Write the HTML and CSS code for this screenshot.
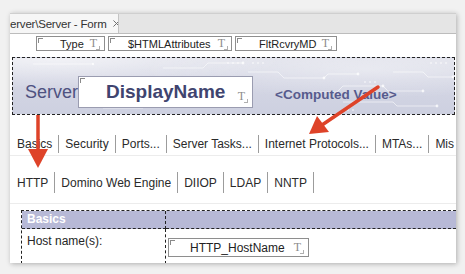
FILE: index.html
```html
<!DOCTYPE html>
<html lang="en">
<head>
  <meta charset="UTF-8" />
  <title>Server - Form</title>
  <link rel="stylesheet" href="styles.css">
</head>
<body>
  <div class="window">
    <div class="tabbar">
      <div class="doc-tab">
        <span class="doc-title">erver\Server - Form</span>
        <svg class="close" viewBox="0 0 8 8"><path d="M0.5 0.5L7.5 7.5M7.5 0.5L0.5 7.5" stroke="#6a6a6a" stroke-width="1.1" fill="none"/></svg>
      </div>
    </div>

    <div class="field-row">
      <span class="field f-type"><span class="field-name">Type</span><span class="t-mark">T</span></span>
      <span class="field f-html"><span class="field-name">$HTMLAttributes</span><span class="t-mark">T</span></span>
      <span class="field f-flt"><span class="field-name">FltRcvryMD</span><span class="t-mark">T</span></span>
    </div>

    <div class="banner">
      <span class="banner-label">Server</span>
      <span class="field big"><span class="field-name">DisplayName</span><span class="t-mark">T</span></span>
      <span class="computed">&lt;Computed Value&gt;</span>
    </div>

    <div class="tabs main-tabs">
      <span class="tab">Basics</span>
      <span class="tab">Security</span>
      <span class="tab">Ports...</span>
      <span class="tab">Server Tasks...</span>
      <span class="tab active">Internet Protocols...</span>
      <span class="tab">MTAs...</span>
      <span class="tab last">Mis</span>
    </div>

    <div class="tabs sub-tabs">
      <span class="tab">HTTP</span>
      <span class="tab">Domino Web Engine</span>
      <span class="tab">DIIOP</span>
      <span class="tab">LDAP</span>
      <span class="tab">NNTP</span>
    </div>

    <div class="grid">
      <div class="cell head">Basics</div>
      <div class="cell head"></div>
      <div class="cell label">Host name(s):</div>
      <div class="cell">
        <span class="field f-host"><span class="field-name">HTTP_HostName</span><span class="t-mark">T</span></span>
      </div>
    </div>
  </div>

  <!-- callout arrows drawn over the screenshot -->
  <svg class="arrows" viewBox="0 0 465 274">
    <line x1="378" y1="87" x2="322" y2="125" stroke="#de4329" stroke-width="3.5" stroke-linecap="round"/>
    <polygon points="309,134 329,132 317,116" fill="#de4329"/>
    <line x1="38" y1="115" x2="38" y2="151" stroke="#de4329" stroke-width="3.5"/>
    <polygon points="28,149 48,149 38,168" fill="#de4329"/>
  </svg>
</body>
</html>
```

FILE: styles.css
```css
* {
  box-sizing: border-box;
}
html, body {
  margin: 0;
  padding: 0;
}
body {
  width: 465px;
  height: 274px;
  overflow: hidden;
  position: relative;
  padding: 13px 9px 0 10px;
  background: #f1f1f1;
  font-family: 'Liberation Sans', Arial, sans-serif;
  color: #262626;
}
.window {
  width: 446px;
  height: 250px;
  background: #fff;
  box-shadow: 1px 1px 5px rgba(0,0,0,0.28);
  overflow: hidden;
  display: flex;
  flex-direction: column;
}

/* document tab strip */
.tabbar {
  flex: none;
  height: 21px;
  display: flex;
  background: #e5e5e5;
  border-top: 1px solid #cfcfcf;
  border-bottom: 1px solid #bcbcbc;
}
.doc-tab {
  width: 109px;
  display: flex;
  align-items: center;
  gap: 6px;
  background: #f6f6f6;
  border-right: 1px solid #c4c4c4;
  font-size: 11.5px;
  letter-spacing: -0.2px;
  color: #333;
  white-space: nowrap;
  overflow: hidden;
}
.close {
  width: 7px;
  height: 7px;
  flex: none;
}

/* field boxes */
.field-row {
  flex: none;
  height: 22px;
  display: flex;
  align-items: flex-start;
  gap: 3px;
  padding: 2px 0 0 26px;
}
.field {
  position: relative;
  display: flex;
  align-items: center;
  height: 15px;
  border: 1px solid #8e8e8e;
  background: #fff;
  font-size: 11px;
  color: #222;
  white-space: nowrap;
}
.field::before {
  content: "";
  position: absolute;
  left: 1px;
  top: 1px;
  width: 4px;
  height: 4px;
  border-left: 1px solid #8a8a8a;
  border-top: 1px solid #8a8a8a;
}
.t-mark {
  position: relative;
  margin-left: auto;
  padding-right: 3px;
  font-family: 'Liberation Serif', 'Times New Roman', serif;
  font-size: 12px;
  color: #8c8c8c;
}
.t-mark::after {
  content: "";
  position: absolute;
  right: 0;
  bottom: 1px;
  width: 3px;
  height: 3px;
  border-right: 1px solid #b0b0b0;
  border-bottom: 1px solid #b0b0b0;
}
.f-type { width: 69px; padding-left: 23px; padding-right: 4px; }
.f-html { width: 124px; padding-left: 19px; padding-right: 3px; }
.f-flt { width: 102px; padding-left: 23px; padding-right: 4px; }

/* banner with circuit-board texture */
.banner {
  flex: none;
  height: 58px;
  margin: 1px 1px 0 2px;
  padding: 18px 0 6px 12px;
  display: flex;
  align-items: center;
  border: 1px dashed #222;
  background:
    url("data:image/svg+xml;utf8,<svg xmlns='http://www.w3.org/2000/svg' width='443' height='56'><g stroke='white' stroke-opacity='0.55' fill='none'><path d='M150 10h40l5-5h35'/><path d='M235 14h30l6 6h40l4-4h30'/><path d='M300 34h24l6-6h40l5 5h35'/><path d='M330 44h50l4 4h40'/><path d='M380 14h30l5 5h25'/><path d='M90 50h40l4-4h50'/><path d='M20 6h60'/></g><g fill='white' fill-opacity='0.75'><circle cx='230' cy='5' r='1.4'/><circle cx='311' cy='20' r='1.4'/><circle cx='345' cy='16' r='1.4'/><circle cx='370' cy='28' r='1.4'/><circle cx='410' cy='33' r='1.4'/><circle cx='424' cy='48' r='1.4'/><circle cx='440' cy='19' r='1.4'/><circle cx='184' cy='46' r='1.4'/><circle cx='80' cy='6' r='1.2'/><circle cx='120' cy='48' r='1.2'/></g><g fill='white' fill-opacity='0.55'><circle cx='215' cy='5' r='1'/><circle cx='220' cy='5' r='1'/><circle cx='225' cy='5' r='1'/><circle cx='240' cy='5' r='1'/><circle cx='245' cy='5' r='1'/><circle cx='250' cy='5' r='1'/><circle cx='418' cy='5' r='1'/><circle cx='423' cy='5' r='1'/><circle cx='428' cy='5' r='1'/><circle cx='433' cy='5' r='1'/><circle cx='352' cy='24' r='1'/><circle cx='357' cy='24' r='1'/><circle cx='362' cy='24' r='1'/><circle cx='330' cy='52' r='1'/><circle cx='335' cy='52' r='1'/><circle cx='340' cy='52' r='1'/></g></svg>") no-repeat,
    radial-gradient(ellipse at 80% 20%, rgba(255,255,255,0.4), transparent 45%),
    radial-gradient(ellipse at 10% 0%, rgba(255,255,255,0.6), transparent 40%),
    linear-gradient(180deg, #dfe0ea 0%, #d4d6e4 40%, #cdd0e0 100%);
}
.banner-label {
  font-size: 18px;
  color: #4e5180;
}
.field.big {
  width: 175px;
  height: 32px;
  padding-left: 27px;
  padding-right: 4px;
  align-items: center;
  border-color: #9a9cb0;
}
.field.big .field-name {
  font-size: 19px;
  font-weight: 700;
  color: #40446f;
}
.field.big .t-mark {
  align-self: flex-end;
  margin-bottom: 3px;
}
.computed {
  margin-left: 22px;
  margin-top: 4px;
  font-size: 13.5px;
  font-weight: 700;
  color: #575b8d;
}

/* form tabs */
.tabs {
  flex: none;
  display: flex;
  align-items: flex-start;
  font-size: 12px;
  color: #2a2a2a;
  border-bottom: 1px solid #ececec;
  white-space: nowrap;
}
.main-tabs {
  height: 41px;
  padding: 20px 0 0 1px;
}
.sub-tabs {
  height: 48px;
  padding: 16px 0 0 1px;
}
.tab {
  flex: none;
  height: 18px;
  line-height: 19px;
  padding: 0 6px;
  border-right: 1px solid #9c9c9c;
}
.sub-tabs .tab {
  height: 21px;
  line-height: 22px;
}
.tab.last {
  border-right: none;
}

/* table */
.grid {
  flex: none;
  margin: 6px 0 0 11px;
  display: grid;
  grid-template-columns: 144px 1fr;
  grid-template-rows: 18px 35px;
  border-left: 1px dashed #222;
  border-top: 1px dashed #222;
  font-size: 12px;
}
.cell {
  padding-left: 5px;
}
.cell:nth-child(odd) {
  border-right: 1px dashed #222;
}
.cell.head {
  background: #b7b9d6;
  border-bottom: 1px dashed #222;
  color: #fff;
  font-weight: 700;
  line-height: 17px;
}
.cell.label {
  padding-top: 5px;
}
.grid .cell:last-child {
  padding: 9px 0 0 2px;
}
.f-host {
  width: 141px;
  height: 19px;
  padding-left: 21px;
  padding-right: 4px;
  font-size: 12px;
}

.arrows {
  position: absolute;
  left: 0;
  top: 0;
  width: 465px;
  height: 274px;
  pointer-events: none;
}
```
